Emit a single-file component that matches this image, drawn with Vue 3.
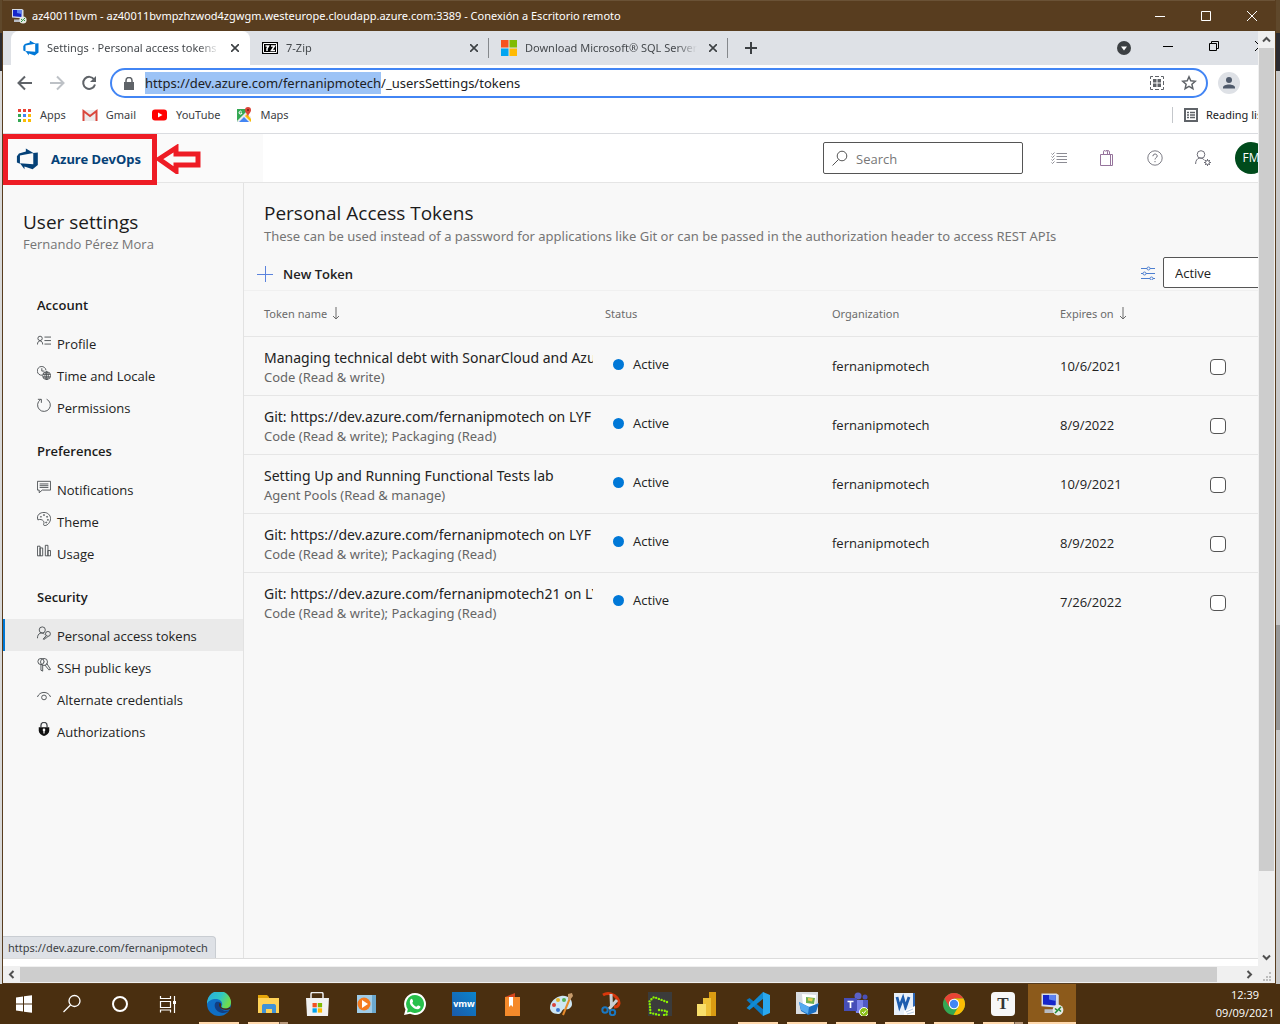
<script setup>
import { onMounted, ref } from 'vue'

const svg = (body, box = 16) =>
  `<svg viewBox="0 0 ${box} ${box}" width="100%" height="100%" aria-hidden="true">${body}</svg>`
const line = (body) => svg(`<g fill="none" stroke="currentColor">${body}</g>`)

const devopsLogo = svg('<path fill="currentColor" d="M15.5 3.2v9.2l-3.8 3.1-5.9-2.1v2.1l-3.300-4.400 9.700.700V3.600L15.500 3.200zM12.300 3.700 6.800.400v2.200L1.800 4 .300 6v4.500l2.200 1V5.500l9.800-1.800z"/>')
const rdpLogo = svg('<path d="M1 1h10l1.500 1v8.500L1 9.500z" fill="#d5dbe6"/><path d="M2 2h8.500v7L2 8.300z" fill="#1526c9"/><path d="M6 2h4.500v4L6 5z" fill="#5d82f0"/><path d="M3 11.500h6l1 2.500H3z" fill="#b8bcc4"/><circle cx="12" cy="12" r="3.600" fill="#e4e8e4"/><path d="m10 11 1.700 1.400L10 14M14 10l-1.600 1.500L14 13" stroke="#238b35" fill="none"/>')

const tabs = [
  { title: 'Settings · Personal access tokens', icon: devopsLogo, kind: 'devops', active: true },
  { title: '7-Zip', kind: 'zip', icon: svg('<path fill="#000" d="M0 2h16v12H0z"/><path fill="none" stroke="#fff" d="M1.500 3.500h13v9h-13z"/><path d="M3.500 6h3L5 8.500V11M9 6h3.500L9.500 10.500H13" fill="none" stroke="#fff" stroke-width="1.500"/>') },
  { title: 'Download Microsoft® SQL Server', kind: 'ms', icon: svg('<path fill="#f8521f" d="M0 0h7.500v7.500H0z"/><path fill="#80bb01" d="M8.500 0H16v7.500H8.500z"/><path fill="#02a5f0" d="M0 8.500h7.500V16H0z"/><path fill="#ffba02" d="M8.500 8.500H16V16H8.500z"/>') },
]

const bookmarks = [
  { name: 'Apps', icon: svg('<path fill="#ea4335" d="M2 2h3v3H2zM7 2h3v3H7zM12 2h3v3h-3z"/><path fill="#34a853" d="M2 7h3v3H2zM2 12h3v3H2z"/><path fill="#4285f4" d="M7 7h3v3H7z"/><path fill="#fbbc04" d="M12 7h3v3h-3zM7 12h3v3H7zM12 12h3v3h-3z"/>') },
  { name: 'Gmail', icon: svg('<path fill="#ececec" d="M1 3h14v11H1z"/><path d="M1.500 14V4L8 9l6.500-5v10" fill="none" stroke="#d9473c" stroke-width="2"/>') },
  { name: 'YouTube', icon: svg('<rect y="2.500" width="15" height="11" rx="3" fill="#f00"/><path d="m6 5.500 4.500 2.500L6 10.500z" fill="#fff"/>') },
  { name: 'Maps', icon: svg('<path fill="#34a853" d="M1 2h10v6l-9 7-1-1z"/><path fill="#e8eaed" d="m1 14 9-9 5 5v5H2z"/><path fill="#4285f4" d="m3 15 5-5 5 5z"/><path fill="#fbbc04" d="m9 9 2-2 4 5v3z"/><path fill="#db4437" d="M12 0a3 3 0 0 1 3 3c0 2.500-2.500 3.500-3 7-.500-3.500-3-4.500-3-7a3 3 0 0 1 3-3z"/><circle cx="12" cy="3" r="1" fill="#7b1d14"/><path d="M5.500 4.500a1.500 1.500 0 1 0 .500 1.500H4.700" stroke="#fff" fill="none"/>') },
]

const headerTools = [
  { name: 'Work items', icon: line('<path d="M5.500 3.500H16M5.500 6.500H16M5.500 9.500H16M5.500 12.500H16M.500 3.500l1 1 2-2M.500 6.500l1 1 2-2M.500 9.500l1 1 2-2M.500 12.500l1 1 2-2" stroke-width=".800"/>') },
  { name: 'Marketplace', icon: line('<path d="M1.500 4.500h12v11h-12zM11.500 4.500v11M4.500 4.500V2a2 2 0 0 1 4 0v2.500M6.500 1.500C7.500 0 10.500.200 10.500 2v2.500" stroke="#96749c"/>') },
  { name: 'Help', icon: line('<circle cx="8" cy="8" r="7.200" stroke-width=".900"/><path d="M5.900 6.200c0-3 4.300-2.700 4.300-.200 0 1.800-2.200 1.700-2.200 3.500M8 11v1.200"/>') },
  { name: 'User settings', icon: line('<circle cx="6" cy="4.500" r="3.800"/><path d="M.600 14c0-7 6.500-7.500 8.900-3.600"/><circle cx="12.500" cy="12.500" r="2"/><path d="M12.500 9v1.500M12.500 14.500V16M9 12.500h1.500M14.500 12.500H16M10 10l1 1M14 14l1 1M10 15l1-1M14 11l1-1"/>') },
]

const groups = [
  { name: 'Account', items: [
    { name: 'Profile', icon: line('<circle cx="3.500" cy="5" r="2.500"/><path d="M.500 12c0-5.500 6-5.500 6 0M8.500 3.500H16M8.500 7.500H16M8.500 11.500H16"/>') },
    { name: 'Time and Locale', icon: line('<path d="M6 10.500A5 5 0 1 1 10.300 5M5.500 2.500v3.300h3"/><circle cx="11" cy="11" r="4.500"/><ellipse cx="11" cy="11" rx="2" ry="4.500"/><path d="M6.500 9.500h9M6.500 12.500h9M11 6.500v9"/>') },
    { name: 'Permissions', icon: line('<path d="M11 1.400a7.300 7.300 0 1 1-7 .500M1 1.500h4v4"/>') },
  ] },
  { name: 'Preferences', items: [
    { name: 'Notifications', icon: line('<path d="M.500 1.500h15v10H6l-3.500 3v-3h-2zM3 4.500h10M3 6.500h10M3 8.500h10"/>') },
    { name: 'Theme', icon: line('<path d="M1 9C-1 3 4 .500 8 .500c4 0 7.500 3 7.500 7S12 15.500 9 15.500s0-3-1.500-5S3.500 8 1 9z"/><circle cx="4.500" cy="5.500" r=".500"/><circle cx="8" cy="3.500" r=".600"/><circle cx="11.500" cy="5.500" r=".600"/><circle cx="12.500" cy="9" r=".600"/><circle cx="10.500" cy="12" r=".600"/>') },
    { name: 'Usage', icon: line('<path d="M.500 2.500h3v11h-3zM3.500 4.500h3v9h-3zM9.500 1.500h3v12h-3zM12.500 7.500h3v6h-3z"/>') },
  ] },
  { name: 'Security', items: [
    { name: 'Personal access tokens', active: true, icon: line('<circle cx="6" cy="4.500" r="3.500"/><path d="M.500 14c0-6 5-7.500 8-4.500"/><circle cx="12.500" cy="9" r="2.800"/><path d="m10.500 11-3.500 4h2l.500-1.500H11L12.500 12"/>') },
    { name: 'SSH public keys', icon: line('<circle cx="4.500" cy="4" r="3.500"/><circle cx="8" cy="4.500" r="4"/><path d="M4.500 7.500V14l2 1V8M9 8l4.500 5.500 2-.500-4.500-7M8 4v1"/>') },
    { name: 'Alternate credentials', icon: line('<path d="M.500 8C3 1 13 1 15.500 8"/><circle cx="8" cy="8.500" r="2.700"/>') },
    { name: 'Authorizations', icon: svg('<path d="M4.500 6V4a3.500 3.500 0 0 1 7 0v2" fill="none" stroke="currentColor" stroke-width="1.500"/><path d="M2 6h12v4c0 3-3 5-6 6-3-1-6-3-6-6z" fill="#111"/><circle cx="8" cy="9" r="1.500" fill="#fff"/><path fill="#fff" d="M7.300 9h1.400v4H7.300z"/>') },
  ] },
]

const tokens = [
  { name: 'Managing technical debt with SonarCloud and Azure', scope: 'Code (Read & write)', org: 'fernanipmotech', expires: '10/6/2021' },
  { name: 'Git: https://dev.azure.com/fernanipmotech on LYF', scope: 'Code (Read & write); Packaging (Read)', org: 'fernanipmotech', expires: '8/9/2022' },
  { name: 'Setting Up and Running Functional Tests lab', scope: 'Agent Pools (Read & manage)', org: 'fernanipmotech', expires: '10/9/2021' },
  { name: 'Git: https://dev.azure.com/fernanipmotech on LYF', scope: 'Code (Read & write); Packaging (Read)', org: 'fernanipmotech', expires: '8/9/2022' },
  { name: 'Git: https://dev.azure.com/fernanipmotech21 on LYF', scope: 'Code (Read & write); Packaging (Read)', org: '', expires: '7/26/2022' },
]

const shellButtons = [
  { name: 'Start', icon: svg('<path fill="#fff" d="M4 5.500 11 4.500V11.500H4zM12 4.300 20 3.200v8.300h-8zM4 12.500h7v7l-7-1zM12 12.500h8v8.300l-8-1.100z"/>', 24) },
  { name: 'Search', icon: svg('<circle cx="14.500" cy="9" r="5.500" fill="none" stroke="#fff" stroke-width="1.300"/><path d="m10.500 13-7 7" stroke="#fff" stroke-width="1.300"/>', 24) },
  { name: 'Cortana', icon: svg('<circle cx="12" cy="12" r="7" fill="none" stroke="#fff" stroke-width="2"/>', 24) },
  { name: 'Task view', icon: svg('<path fill="none" stroke="#fff" stroke-width="1.200" d="M4.500 4v2.500h10V4M4.500 9.500h10v6h-10zM4.500 20.500V18h10v2.500M18.500 4v17"/><path fill="#fff" d="M17 9h3v3h-3z"/>', 24) },
]

const apps = [
  { name: 'Edge', open: true, icon: svg('<defs><linearGradient id="edgeTop" x1="0" y1="0" x2="1" y2=".400"><stop offset="0" stop-color="#29a9e1"/><stop offset=".600" stop-color="#2fc6c4"/><stop offset="1" stop-color="#6fdc4c"/></linearGradient></defs><circle cx="12" cy="12" r="12" fill="#0f6fc5"/><path d="M0 12a12 12 0 0 1 24-2c0 5-3 6.500-6 6.500s-4-1.500-3-3C16 10 13 7 9 7 4.500 7 1 9 0 12z" fill="url(#edgeTop)"/><path d="M9 10c-3 3-1 10 6 11 3 .500 6-1 7.500-3-3 1.500-7 1-8.500-1.500C13 15 13 14 14 13c1-2-2-4-5-3z" fill="#123f83"/><path d="M12.500 11c2 .500 2 2 1.300 3 .200 1.500 1.500 2.500 4.200 2.500 2.500 0 4-.500 5.500-2L23 17c-3 1.500-7.500 1.200-9.500-1-1.500-1.500-2-3.500-1-5z" fill="#4b2e0e"/>', 24) },
  { name: 'File Explorer', open: true, stacked: true, icon: svg('<path fill="#e5a50a" d="M2 3h9l2 2v5H2z"/><path fill="#ffd257" d="M2 6h21v15H2z"/><path fill="#3f92d9" d="M6 21v-7c0-1.500 1-2 2-2h10c1.500 0 2 1 2 2v7h-4v-4h-6v4z"/>', 24) },
  { name: 'Microsoft Store', icon: svg('<path fill="none" stroke="#eee" stroke-width="1.500" d="M6 6V2c0-1 .500-1.500 1.500-1.500h9C17.500.500 18 1 18 2v4"/><path fill="#f1f1f1" d="M1 6h23l-1 18H2z"/><path fill="#f25022" d="M7.500 11h4.300v4.300H7.500z"/><path fill="#7fba00" d="M12.800 11h4.300v4.300h-4.300z"/><path fill="#00a4ef" d="M7.500 16.300h4.300v4.300H7.500z"/><path fill="#ffb900" d="M12.800 16.300h4.300v4.300h-4.300z"/>', 24) },
  { name: 'Media Player', icon: svg('<path fill="#6ca9cf" d="M7 3h15v18H7z"/><path fill="#9fcce8" d="M3 3h15v18H3z"/><circle cx="10" cy="12" r="6.500" fill="#f47b20"/><path fill="#fff" d="m8 8 6 4-6 4z"/>', 24) },
  { name: 'WhatsApp', icon: svg('<path fill="#fff" d="M12 1a11 11 0 1 1-5 20.800L1 23l1.500-5.500A11 11 0 0 1 12 1z"/><path fill="#28c04b" d="M12 3a9 9 0 1 1-4.500 16.800L4 20.500l.800-3.300A9 9 0 0 1 12 3z"/><path fill="#fff" d="M7.500 7.500c1-1.500 2-.500 2.500 1.500.300 1-.700 1.500-.700 2 1 2 2.300 3 4.200 3.800.800-.800 1.200-1.500 2-1.300 2 .800 2.500 1.200 1.500 2.500-2 2.500-6 .800-8-1.500-2-2-3-4.500-1.500-7z"/>', 24) },
  { name: 'VMware', label: 'vmw' },
  { name: 'Bookmarks', icon: svg('<path fill="#d6471d" d="m4 5 10-4v4z"/><path fill="#f58a2b" d="M4 5h15v19H4z"/><path fill="#fff" d="M8 5h4v10l-2-2-2 2z"/>', 24) },
  { name: 'Paint', icon: svg('<path fill="#cde6f4" d="M11 4c7-1 11 3 11 8 0 4-4 6-7 5s-3 5-7 5c-5 0-8-3-8-6 0-7 6-11 11-12z"/><circle cx="8" cy="8" r="2" fill="#e4b62a"/><circle cx="14" cy="8" r="2" fill="#52b052"/><circle cx="4" cy="13" r="2" fill="#d9453a"/><circle cx="8" cy="18" r="2" fill="#3b77d0"/><path d="m20 6-7 17" stroke="#e58a2c" stroke-width="2"/><path d="m18 2 4-1 1 3-3 4-2-1z" fill="#c79b6b"/>', 24) },
  { name: 'Snipping Tool', icon: svg('<path d="M4 3c5-3 11-1 14 3s3 9-3 9" fill="none" stroke="#d8380c" stroke-width="3"/><path d="m12 2 .500 13M18 8l-8 9" stroke="#c9ced3" stroke-width="3"/><circle cx="6" cy="18" r="2.700" fill="none" stroke="#1a78c2" stroke-width="2"/><circle cx="13.500" cy="20.500" r="2.700" fill="none" stroke="#1a78c2" stroke-width="2"/>', 24) },
  { name: 'Greenshot', icon: svg('<path fill="#3b3b3b" d="M0 0h24v24H0z"/><path fill="none" stroke="#8cf000" stroke-width="2.400" stroke-dasharray="0 2.900" stroke-linecap="round" d="M19 10 6 5 1.500 9l1 12 9 2M11 18l8 1-.500 4h-5"/>', 24) },
  { name: 'Power BI', icon: svg('<path fill="#d99b12" d="M12 0h7v24h-7z"/><path fill="#edc036" d="M6 6h8v18H6z"/><path fill="#f8df6b" d="M0 12h9v12H0z"/>', 24) },
  { name: 'VS Code', open: true, icon: svg('<path d="m.500 8 3-2L18 18v5l-1 1z" fill="#0b78c0"/><path d="m.500 16 3 2L18 6V1l-1-1z" fill="#118bd4"/><path d="m17 0 7 3v18l-7 3z" fill="#2aa8ee"/>', 24) },
  { name: 'Pictures', open: true, icon: svg('<path fill="#d9dce0" d="M1 0h22v22H1z"/><path fill="#fff" d="m7 2 14 1-1 12-12-1z"/><path fill="#6fae4e" d="m11 5 9 1-1 6-8-1z"/><path fill="#eacb4b" d="m13 6 5 .500-1 3-4-1z"/><path fill="#1b6fc2" d="m4 10 10 5 10-4-3 9-8 3-7-4z"/><path fill="#56aaf0" d="m4 10 10 5-1 7-7-4z"/>', 24) },
  { name: 'Teams', open: true, icon: svg('<circle cx="14" cy="4" r="3.500" fill="#5b62c6"/><circle cx="21" cy="5" r="2.500" fill="#4950b8"/><path fill="#7b83eb" d="M10 8h10v13h-8z"/><path fill="#5059c9" d="M19 8h5v8l-5 3z"/><path fill="#464eb8" d="M0 6h13v13H0z"/><path d="M3.500 9.500h6M6.500 9.500V16" stroke="#fff" stroke-width="1.700"/><circle cx="20" cy="20" r="4.500" fill="#8cbd18" stroke="#fff"/><path d="m18 20 1.500 1.500L22 18.500" fill="none" stroke="#fff"/>', 24) },
  { name: 'Word', open: true, icon: svg('<path fill="#e8f0fa" d="M1 1h21v22H1z"/><path fill="#2c67b8" d="M20 1h2v16h-2z"/><path d="m4 5 2.500 10L10 6l2.500 9L16 5" fill="none" stroke="#1d5cae" stroke-width="2.800"/><path fill="#fff" d="m11 19 11-5v9H11z"/><path d="m13 20 7-3M14 22l7-2" stroke="#b7cbe4"/>', 24) },
  { name: 'Chrome', open: true, icon: svg('<circle cx="12" cy="12" r="11" fill="#34a853"/><path fill="#ea4335" d="M2.500 6.500A11 11 0 0 1 21.500 6.500H12L7.200 14.700z"/><path fill="#fbbc04" d="M21.500 6.500A11 11 0 0 1 11.500 23l5-8.500L12 6.500z"/><circle cx="12" cy="12" r="5.200" fill="#fff"/><circle cx="12" cy="12" r="4.200" fill="#4285f4"/>', 24) },
  { name: 'Typora', label: 'T', open: true, stacked: true },
  { name: 'Remote Desktop', open: true, active: true, icon: rdpLogo },
]

const origin = 'https://dev.azure.com/fernanipmotech'
const address = ref(origin + '/_usersSettings/tokens')
const addressBox = ref(null)
const search = ref('')
const filter = ref('Active')

onMounted(() => {
  addressBox.value.focus()
  addressBox.value.setSelectionRange(0, origin.length)
})
</script>

<template>
  <div class="desktop">
    <div class="stage">
      <div class="behind left"><i></i><i></i></div>
      <section class="window">
        <header class="titlebar">
          <span class="rdp" v-html="rdpLogo"></span>
          <span class="caption">az40011bvm - az40011bvmpzhzwod4zgwgm.westeurope.cloudapp.azure.com:3389 - Conexión a Escritorio remoto</span>
          <button aria-label="Minimize"><svg width="10" height="10"><path d="M0 5.500h10" /></svg></button>
          <button aria-label="Maximize"><svg width="10" height="10"><path d="M.5.500h9v9h-9z" /></svg></button>
          <button aria-label="Close"><svg width="10" height="10"><path d="m0 0 10 10M10 0 0 10" /></svg></button>
        </header>

        <div class="client">
          <div class="view">
            <div class="browser">
              <div class="tabstrip">
                <div v-for="t in tabs" :key="t.title" class="tab" :class="{ active: t.active }">
                  <span class="fav" :class="t.kind" v-html="t.icon"></span>
                  <span class="tabtitle">{{ t.title }}</span>
                  <button aria-label="Close tab"><svg width="8" height="8"><path d="m0 0 8 8M8 0 0 8" stroke="#3c4043" stroke-width="1.600" /></svg></button>
                </div>
                <button class="newtab" aria-label="New tab"><svg width="12" height="12"><path d="M6 0v12M0 6h12" stroke="#3c4043" stroke-width="2" /></svg></button>
                <div class="controls">
                  <button class="drop" aria-label="Search tabs"><svg width="14" height="14"><circle cx="7" cy="7" r="7" fill="#3c4043" /><path d="M4 5.500h6L7 9.500z" fill="#fff" /></svg></button>
                  <button aria-label="Minimize"><svg width="10" height="10"><path d="M0 5.500h10" stroke="#000" /></svg></button>
                  <button aria-label="Restore"><svg width="10" height="10"><path d="M.5 2.500h7v7h-7zM2.500 2.500v-2h7v7h-2" fill="none" stroke="#000" /></svg></button>
                  <button aria-label="Close"><svg width="10" height="10"><path d="m0 0 10 10M10 0 0 10" stroke="#000" /></svg></button>
                </div>
              </div>

              <div class="toolbar">
                <button aria-label="Back"><svg width="16" height="16"><path d="M15 8H2M8 1.500 1.500 8 8 14.500" fill="none" stroke="#5f6368" stroke-width="2" /></svg></button>
                <button aria-label="Forward"><svg width="16" height="16"><path d="M1 8h13M8 1.500 14.500 8 8 14.500" fill="none" stroke="#bdc1c6" stroke-width="2" /></svg></button>
                <button aria-label="Reload"><svg width="16" height="16"><path d="M13.200 4.500A6 6 0 1 0 14 9.500" fill="none" stroke="#5f6368" stroke-width="2" /><path d="M15 1v6H9z" fill="#5f6368" /></svg></button>
                <div class="omnibox">
                  <svg width="10" height="13"><path d="M0 5h10v8H0z" fill="#5f6368" /><path d="M2 5.500V3.500a3 3 0 0 1 6 0v2" fill="none" stroke="#5f6368" stroke-width="1.500" /></svg>
                  <input ref="addressBox" v-model="address" aria-label="Address" spellcheck="false" />
                  <svg width="14" height="14"><path d="M.500 3V.500H3M5 .500h4M11 .500h2.500V3M13.500 5v4M13.500 11v2.500H11M9 13.500H5M3 13.500H.500V11M.500 9V5" fill="none" stroke="#5f6368" /><path d="M3 3h3.500v3.500H3zM7.500 3H11v3.500H7.500zM3 7.500h3.500V11H3zM7.500 7.500H11V11H7.500z" fill="#5f6368" /></svg>
                  <svg class="star" width="16" height="16"><path d="m8 1.800 1.800 4 4.500.500-3.400 3 1 4.400L8 11.400l-3.900 2.300 1-4.400-3.400-3 4.500-.500z" fill="none" stroke="#5f6368" stroke-width="1.500" /></svg>
                </div>
                <button class="person" aria-label="Profile"><svg width="22" height="22"><circle cx="11" cy="11" r="11" fill="#dee1e6" /><circle cx="11" cy="8" r="3" fill="#4f5a6b" /><path d="M5 16.500v-1c0-4 12-4 12 0v1z" fill="#4f5a6b" /></svg></button>
              </div>

              <nav class="bookmarks">
                <a v-for="b in bookmarks" :key="b.name" href="#"><span class="fav" v-html="b.icon"></span>{{ b.name }}</a>
                <a class="reading" href="#"><svg width="14" height="14"><path d="M1 1h12v12H1z" fill="none" stroke="#5f6368" stroke-width="2" /><path d="M3 4.500h2M6 4.500h5M3 7h2M6 7h5M3 9.500h2M6 9.500h5" stroke="#5f6368" stroke-width="1.500" /></svg>Reading list</a>
              </nav>

              <div class="page">
                <header class="suite">
                  <a class="brand" href="#">
                    <span class="logo" v-html="devopsLogo"></span>
                    <b>Azure DevOps</b>
                    <span class="frame"></span>
                    <svg class="pointer" width="46" height="30"><path d="M4 15 21 4v6h22v11H21v6z" fill="none" stroke="#ee1c25" stroke-width="5" /></svg>
                  </a>
                  <label class="search">
                    <svg width="16" height="16"><circle cx="10" cy="6" r="4.800" fill="none" stroke="#555" /><path d="m6.500 9.500-6 6" stroke="#555" /></svg>
                    <input v-model="search" placeholder="Search" aria-label="Search" />
                  </label>
                  <div class="tools">
                    <button v-for="t in headerTools" :key="t.name" :aria-label="t.name" v-html="t.icon"></button>
                  </div>
                  <button class="fm">FM</button>
                </header>

                <div class="content">
                  <aside>
                    <h2>User settings</h2>
                    <p>Fernando Pérez Mora</p>
                    <nav>
                      <template v-for="g in groups" :key="g.name">
                        <h3>{{ g.name }}</h3>
                        <a v-for="i in g.items" :key="i.name" href="#" :class="{ active: i.active }"><span v-html="i.icon"></span>{{ i.name }}</a>
                      </template>
                    </nav>
                  </aside>

                  <main>
                    <h1>Personal Access Tokens</h1>
                    <p class="intro">These can be used instead of a password for applications like Git or can be passed in the authorization header to access REST APIs</p>
                    <div class="actions">
                      <button class="add"><svg width="16" height="16"><path d="M8.500 0v16M0 8.500h16" stroke="#5b83dd" /></svg>New Token</button>
                      <svg class="sliders" width="14" height="14"><g fill="none" stroke="#4d7fd0"><path d="M0 2.500h6M9 2.500h5M0 7.500h2M5 7.500h9M0 12.500h9M12 12.500h2" /><circle cx="7.500" cy="2.500" r="1.500" /><circle cx="3.500" cy="7.500" r="1.500" /><circle cx="10.500" cy="12.500" r="1.500" /></g></svg>
                      <select v-model="filter" aria-label="Token status"><option>Active</option><option>Expired</option></select>
                    </div>
                    <table>
                      <colgroup><col /><col class="c-status" /><col class="c-org" /><col class="c-date" /><col class="c-pick" /></colgroup>
                      <thead>
                        <tr>
                          <th>Token name <svg width="8" height="13"><path d="M4 0v12M1 9l3 3 3-3" /></svg></th>
                          <th>Status</th>
                          <th>Organization</th>
                          <th>Expires on <svg width="8" height="13"><path d="M4 0v12M1 9l3 3 3-3" /></svg></th>
                          <th></th>
                        </tr>
                      </thead>
                      <tbody>
                        <tr v-for="(t, n) in tokens" :key="n">
                          <td><div class="name">{{ t.name }}</div><div class="scope">{{ t.scope }}</div></td>
                          <td class="status"><i></i>Active</td>
                          <td>{{ t.org }}</td>
                          <td>{{ t.expires }}</td>
                          <td class="pick"><input type="checkbox" :aria-label="'Select ' + t.name" /></td>
                        </tr>
                      </tbody>
                    </table>
                  </main>
                </div>
                <div class="hint">https://dev.azure.com/fernanipmotech</div>
              </div>
              <div class="foot"></div>
            </div>
          </div>

          <div class="vbar">
            <svg width="17" height="17"><path d="m5 10.500 3.500-3.500 3.500 3.500" /></svg>
            <div class="track"><i></i></div>
            <svg width="17" height="17"><path d="m5 6.500 3.500 3.500 3.500-3.500" /></svg>
          </div>
        </div>

        <div class="hbar">
          <svg width="17" height="17"><path d="M10.500 5 7 8.500l3.500 3.500" /></svg>
          <div class="track"><i></i></div>
          <svg width="17" height="17"><path d="M6.500 5 10 8.500 6.500 12" /></svg>
          <svg width="17" height="17"><path class="grip" d="M11 6h2v2h-2zM8 10h2v2H8zM11 10h2v2h-2zM5 13h2v2H5zM8 13h2v2H8zM11 13h2v2h-2z" /></svg>
        </div>
      </section>
      <div class="behind right"><i></i><i></i><i></i></div>
    </div>

    <footer class="taskbar">
      <button v-for="s in shellButtons" :key="s.name" class="shell" :aria-label="s.name" v-html="s.icon"></button>
      <div class="apps">
        <button v-for="a in apps" :key="a.name" :aria-label="a.name" :class="{ open: a.open, stacked: a.stacked, active: a.active }">
          <span v-if="a.label" :class="a.label === 'T' ? 'typora' : 'vmw'">{{ a.label }}</span>
          <span v-else v-html="a.icon"></span>
        </button>
      </div>
      <div class="clock"><span>12:39</span><span>09/09/2021</span></div>
    </footer>
  </div>
</template>

<style>
body { margin: 0; }
</style>

<style scoped>
* { box-sizing: border-box; }
.desktop { display: flex; flex-direction: column; min-height: 100vh; overflow: hidden; font: 13px/18px "Open Sans", "Noto Sans", sans-serif; color: #222; background: #f8f8f8; }
button { padding: 0; border: 0; background: none; color: inherit; font: inherit; display: flex; align-items: center; justify-content: center; flex: none; }
a { color: inherit; text-decoration: none; }
svg { flex: none; display: block; }
h1, h2, h3, p { margin: 0; }

.stage { flex: 1; display: flex; }
.behind { display: flex; flex-direction: column; flex: none; background: #d9d9d9; }
.behind.left { width: 2px; }
.behind.right { width: 4px; background: #c8c8c8; }
.behind i { height: 33px; background: #5f482b; }
.behind i + i { height: 38px; background: #2c2c31; }
.behind.right i:nth-child(3) { height: 105px; margin-top: 554px; background: #979797; }
.window { flex: 1; min-width: 0; display: flex; flex-direction: column; border: solid #583d1f; border-width: 0 1px 1px; background: #f0f0f0; }
.titlebar { height: 31px; border-top: 1px solid #6a5236; background: #583d1f; color: #fff; display: flex; align-items: center; font-family: "Noto Sans", sans-serif; font-size: 11px; }
.titlebar .rdp { width: 16px; height: 16px; margin: 0 5px 0 8px; }
.caption { flex: 1; min-width: 0; white-space: nowrap; overflow: hidden; }
.titlebar button { width: 46px; height: 30px; }
.titlebar svg path { fill: none; stroke: #fff; }

.client { flex: 1; display: flex; min-height: 0; }
.view { flex: 1; min-width: 0; overflow: hidden; display: flex; background: #fff; }
.browser { flex: none; width: calc(100% + 25px); display: flex; flex-direction: column; font-size: 12px; }
.tabstrip, .bookmarks, .hint, th { font-family: "Noto Sans", sans-serif; font-size: 11px; }
.tabstrip { height: 34px; flex: none; display: flex; align-items: center; padding-left: 8px; background: #dee1e6; color: #45494d; }
.tab { width: 239px; height: 100%; flex: none; display: flex; align-items: center; gap: 8px; padding: 0 7px 0 12px; position: relative; }
.tab:not(.active)::after { content: ""; position: absolute; right: 0; top: 7px; width: 1px; height: 20px; background: #85888c; }
.tab.active { background: #fff; border-radius: 8px 8px 0 0; }
.tab button { width: 16px; height: 16px; }
.tabtitle { flex: 1; min-width: 0; overflow: hidden; white-space: nowrap; mask-image: linear-gradient(to right, #000 88%, transparent); }
.fav { width: 16px; height: 16px; flex: none; }
.fav.devops { color: #0078d7; }
.newtab { width: 28px; height: 28px; margin-left: 9px; }
.controls { margin-left: auto; display: flex; height: 28px; }
.controls button { width: 46px; padding-bottom: 4px; }
.controls .drop { width: 42px; padding: 0; }

.toolbar { height: 36px; flex: none; display: flex; align-items: center; padding: 0 43px 0 6px; }
.toolbar button { width: 32px; height: 32px; }
.omnibox { flex: 1; height: 30px; display: flex; align-items: center; margin-left: 5px; padding: 0 9px 0 12px; border: 2px solid #4285f4; border-radius: 15px; }
.omnibox input { flex: 1; min-width: 0; height: 22px; margin: 0 8px 0 11px; padding: 0; border: 0; outline: 0; background: none; color: #202124; font: 13px/22px "Noto Sans", sans-serif; }
.omnibox input::selection { background: #9cc3f6; color: #202124; }
.omnibox .star { margin-left: 17px; }
.toolbar .person { width: 22px; margin-left: 10px; }
.bookmarks { height: 33px; flex: none; display: flex; align-items: center; gap: 16px; padding: 0 0 4px 13px; border-bottom: 1px solid #dadce0; color: #3c4043; }
.bookmarks a { display: flex; align-items: center; gap: 8px; }
.bookmarks .reading { width: 111px; height: 16px; margin-left: auto; padding-left: 11px; border-left: 1px solid #c4c7cb; white-space: nowrap; color: #202124; }

.page { flex: 1; display: flex; flex-direction: column; position: relative; border-bottom: 1px solid #dcdcdc; }
.foot { height: 7px; flex: none; }
.suite { height: 49px; flex: none; display: flex; align-items: center; padding-right: 16px; border-bottom: 1px solid #e5e5e5; }
.brand { position: relative; display: flex; align-items: center; gap: 12px; width: 260px; height: 48px; padding: 2px 0 0 13px; background: #fafafa; color: #054177; font-family: "Noto Sans", sans-serif; font-size: 13px; }
.logo { width: 23px; height: 22px; }
.frame { position: absolute; left: 0; top: 0; width: 154px; height: 51px; border: 5px solid #ee1c25; }
.brand .pointer { position: absolute; left: 152px; top: 10px; }
.search { width: 200px; height: 32px; margin-left: auto; display: flex; align-items: center; gap: 8px; padding: 0 8px; border: 1px solid #555; border-radius: 2px; background: #fff; }
.search input { flex: 1; min-width: 0; padding: 2px 0 0; border: 0; outline: 0; background: none; font: inherit; font-size: 13px; }
.search input::placeholder { color: #777; }
.tools { display: flex; gap: 32px; margin: 0 24px 0 28px; color: #6e6e78; }
.tools button { width: 16px; height: 16px; }
.fm { width: 32px; height: 32px; border-radius: 50%; background: #004b1c; color: #fff; font-size: 12px; }

.content { flex: 1; display: flex; background: #f8f8f8; font-size: 13px; }
aside { width: 241px; flex: none; padding-top: 26px; border-right: 1px solid #e2e2e2; }
h2, h1 { font-size: 19px; font-weight: 500; color: #1b1b1b; }
aside h2 { line-height: 26px; padding-left: 20px; }
aside p { padding-left: 20px; color: #757575; }
aside nav { margin-top: 24px; }
h3 { height: 50px; padding: 16px 0 0 34px; font-size: 13px; font-weight: 600; line-height: 24px; color: #1b1b1b; }
aside a { display: flex; align-items: center; gap: 6px; height: 32px; padding: 2px 0 0 34px; }
aside a span { width: 14px; height: 14px; margin-bottom: 6px; color: #44484c; }
aside a.active { background: #eaeaea; box-shadow: inset 2px 0 #0078d4; }

main { flex: 1; min-width: 0; padding-top: 17px; }
h1 { padding-left: 20px; line-height: 27px; }
.intro { padding-left: 20px; font-family: "Noto Sans", sans-serif; color: #757575; white-space: nowrap; }
.actions { height: 34px; margin-top: 12px; display: flex; align-items: flex-start; padding-left: 13px; border-bottom: 1px solid #f0f0f0; }
.add { gap: 10px; height: 34px; margin-right: auto; font-weight: 600; color: #222; }
.sliders { margin: 9px 8px 0 0; }
select { width: 120px; height: 31px; padding: 0 11px; appearance: none; border: 1px solid #555; border-radius: 2px; background: #fff; color: #222; font: inherit; }
table { width: 100%; table-layout: fixed; border-collapse: separate; border-spacing: 0; }
.c-status { width: 227px; }
.c-org { width: 228px; }
.c-date { width: 150px; }
.c-pick { width: 85px; }
th { height: 46px; padding: 0 0 0 12px; text-align: left; font-weight: 400; color: #6b6b6b; border-bottom: 1px solid #e6e6e6; }
th svg { display: inline-block; margin-left: 2px; vertical-align: -2px; fill: none; stroke: #6b6b6b; }
td { height: 59px; padding: 0 0 0 12px; border-bottom: 1px solid #e6e6e6; }
tbody tr:last-child td { border-bottom-color: transparent; }
th:first-child, td:first-child { padding-left: 20px; }
.name { padding-top: 2px; font-family: "Noto Sans", sans-serif; font-size: 14px; line-height: 20px; white-space: nowrap; overflow: hidden; }
.scope { font-family: "Noto Sans", sans-serif; line-height: 18px; color: #666; }
td.status { padding: 0 0 4px 20px; }
.status i { display: inline-block; width: 11px; height: 11px; margin-right: 9px; border-radius: 50%; background: #0078d7; vertical-align: -1px; }
td.pick { padding-top: 2px; }
td input { display: block; width: 16px; height: 16px; margin: 0; appearance: none; border: 1px solid #555; border-radius: 4px; background: #fff; }
.hint { position: absolute; left: 0; bottom: 0; height: 22px; padding: 0 7px 0 5px; border: solid #c9cdd2; border-width: 1px 1px 0 0; border-radius: 0 4px 0 0; background: #dee1e6; color: #3c4043; line-height: 22px; }

.vbar { width: 17px; flex: none; display: flex; flex-direction: column; overflow: hidden; background: #f0f0f0; }
.vbar .track { flex: 1; display: flex; padding-bottom: 78px; }
.vbar i { width: 15px; margin-left: 1px; background: #cdcdcd; }
.hbar { height: 17px; flex: none; display: flex; }
.hbar .track { flex: 1; }
.hbar i { display: block; width: 98%; height: 15px; margin-top: 1px; background: #cdcdcd; }
.vbar path, .hbar path { fill: none; stroke: #505050; stroke-width: 2; }
.hbar .grip { fill: #bdbdbd; stroke: none; }

.taskbar { height: 40px; flex: none; display: flex; background: #4a2f10; color: #fff; }
.shell { width: 48px; padding: 8px 12px; }
.apps { display: flex; gap: 1px; margin-left: 3px; }
.apps button { width: 48px; height: 40px; position: relative; }
.apps span { width: 24px; height: 24px; }
.apps .open::after { content: ""; position: absolute; left: 4px; bottom: 0; width: 40px; height: 2px; background: #ffd9ad; }
.apps .stacked::after { background: linear-gradient(to right, #ffd9ad 31px, #6d5a48 31px, #6d5a48 32px, #b9997b 32px); }
.apps .active { background: #8c5a1b; }
.apps .active::after { left: 0; width: 48px; }
.vmw { display: flex; align-items: center; justify-content: center; background: linear-gradient(45deg, #1b5aa9, #0a84cc); font-size: 9px; font-weight: 700; }
.typora { border-radius: 4px; background: #f7f7f7; color: #333; font: 700 17px/24px "Liberation Serif", serif; }
.clock { margin-left: auto; width: 70px; display: flex; flex-direction: column; align-items: center; padding-top: 2px; font-size: 11px; }
</style>
